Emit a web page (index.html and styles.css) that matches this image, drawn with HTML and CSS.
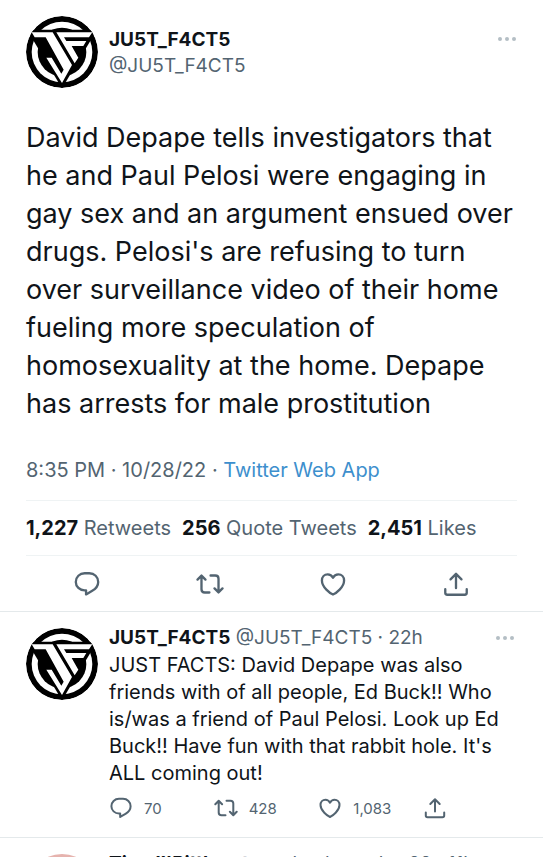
FILE: index.html
```html
<!DOCTYPE html>
<html lang="en">
<head>
  <meta charset="UTF-8" />
  <meta name="viewport" content="width=device-width, initial-scale=1.0"/>
  <title>JU5T_F4CT5 on Twitter</title>
  <link rel="stylesheet" href="styles.css">
</head>
<body>
  <!-- shared icons -->
  <svg class="sprite" aria-hidden="true">
    <symbol id="logo" viewBox="7 5 216 216">
      <circle cx="115" cy="113" r="108" fill="#000"/>
      <circle cx="115" cy="113" r="91" fill="#fff"/>
      <circle cx="115" cy="113" r="73" fill="#000"/>
      <path d="M10 46H220L115 222Z" fill="#000"/>
      <g fill="#fff">
        <path d="M24 54H87L145 152L115 206L68 130H84L113 178L120 166L66 69H33Z"/>
        <path d="M98 54H206L196 69H121L128 80H188L179 95H144L164 130L153 147Z"/>
      </g>
    </symbol>
    <symbol id="reply" viewBox="0 0 24 24">
      <path d="M10 2.8H14C18.300 2.800 21.600 6 21.600 10.200C21.600 13.400 19.600 16 16.500 17.800L11.200 20.900V17.500H10C5.700 17.500 2.400 14.300 2.400 10.200C2.400 6 5.700 2.800 10 2.800Z"/>
    </symbol>
    <symbol id="retweet" viewBox="0 0 24 24">
      <path d="M1.300 8.200L4.700 4.800L8.100 8.200M4.700 5V16.500C4.700 18.200 5.800 19.300 7.500 19.300H11.500M22.700 15.800L19.300 19.200L15.900 15.800M19.300 19V7.500C19.300 5.800 18.200 4.700 16.500 4.700H12.500"/>
    </symbol>
    <symbol id="like" viewBox="0 0 24 24">
      <path d="M12 21C9.500 20 2.500 14.800 2.500 9C2.500 5.900 4.700 3.700 7.400 3.700C9.400 3.700 11.100 4.900 12 6.700C12.900 4.900 14.600 3.700 16.600 3.700C19.300 3.700 21.500 5.900 21.500 9C21.500 14.800 14.500 20 12 21Z"/>
    </symbol>
    <symbol id="share" viewBox="0 0 24 24">
      <path d="M12 15.500V3.500M7.300 8L12 3.300L16.700 8M2.800 16.500V19.500C2.800 20.500 3.500 21.200 4.500 21.200H19.500C20.500 21.200 21.200 20.500 21.200 19.500V16.500"/>
    </symbol>
    <symbol id="more" viewBox="0 0 20 6">
      <circle cx="3" cy="3" r="2"/><circle cx="10" cy="3" r="2"/><circle cx="17" cy="3" r="2"/>
    </symbol>
  </svg>

  <article class="tweet">
    <header class="tweet-header">
      <svg class="avatar" role="img" aria-label="JU5T_F4CT5"><use href="#logo"/></svg>
      <div class="author">
        <a class="name" href="#">JU5T_F4CT5</a>
        <a class="handle" href="#">@JU5T_F4CT5</a>
      </div>
      <button class="more" aria-label="More"><svg><use href="#more"/></svg></button>
    </header>

    <p class="tweet-text">David Depape tells investigators that he and Paul Pelosi were engaging in gay sex and an argument ensued over drugs. Pelosi's are refusing to turn over surveillance video of their home fueling more speculation of homosexuality at the home. Depape has arrests for male prostitution</p>

    <p class="meta">8:35 PM · 10/28/22 · <a href="#">Twitter Web App</a></p>

    <div class="stats">
      <span><b>1,227</b> Retweets</span>
      <span><b>256</b> Quote Tweets</span>
      <span><b>2,451</b> Likes</span>
    </div>

    <div class="actions">
      <button aria-label="Reply"><svg><use href="#reply"/></svg></button>
      <button aria-label="Retweet"><svg><use href="#retweet"/></svg></button>
      <button aria-label="Like"><svg><use href="#like"/></svg></button>
      <button aria-label="Share"><svg><use href="#share"/></svg></button>
    </div>
  </article>

  <article class="reply">
    <svg class="avatar" role="img" aria-label="JU5T_F4CT5"><use href="#logo"/></svg>
    <div class="reply-body">
      <div class="reply-header">
        <div><a class="name" href="#">JU5T_F4CT5</a> <a class="handle" href="#">@JU5T_F4CT5</a> <span class="handle">· 22h</span></div>
        <button class="more" aria-label="More"><svg><use href="#more"/></svg></button>
      </div>
      <p class="reply-text">JUST FACTS: David Depape was also friends with of all people, Ed Buck!! Who is/was a friend of Paul Pelosi. Look up Ed Buck!! Have fun with that rabbit hole. It's ALL coming out!</p>
      <div class="reply-actions">
        <button aria-label="Reply"><svg><use href="#reply"/></svg>70</button>
        <button aria-label="Retweet"><svg><use href="#retweet"/></svg>428</button>
        <button aria-label="Like"><svg><use href="#like"/></svg>1,083</button>
        <button aria-label="Share"><svg><use href="#share"/></svg></button>
      </div>
    </div>
  </article>

  <article class="reply">
    <div class="avatar avatar-pink"></div>
    <div class="reply-body">
      <div class="reply-header">
        <div><a class="name" href="#">Timell'Pittles</a> <a class="handle" href="#">@meekankeaceke_22</a> <span class="handle">· 11h</span></div>
      </div>
    </div>
  </article>
</body>
</html>
```

FILE: styles.css
```css
* {
  box-sizing: border-box;
}

body {
  margin: 0;
  height: 100vh;
  overflow: hidden;
  background: #fff;
  color: #0f1419;
  font-family: Inter, "Liberation Sans", sans-serif;
  font-size: 19px;
}

p {
  margin: 0;
}

a {
  color: inherit;
  text-decoration: none;
}

button {
  display: flex;
  align-items: center;
  padding: 0;
  border: none;
  background: none;
  color: #536471;
  font: inherit;
  cursor: pointer;
}

.sprite {
  display: none;
}

.avatar {
  flex: none;
  width: 72px;
  height: 72px;
  border-radius: 50%;
}

.avatar-pink {
  background: #e6b3ae;
}

.name {
  font-weight: 700;
}

.handle {
  color: #536471;
}

.more {
  height: 20px;
}

.more svg {
  width: 20px;
  height: 6px;
  fill: #b4bec5;
}

.tweet {
  padding: 16px 26px 0;
}

.tweet-header {
  display: flex;
  align-items: flex-start;
  gap: 11px;
}

.author {
  display: flex;
  flex: 1;
  flex-direction: column;
  padding-top: 11px;
  line-height: 26px;
}

.tweet-header .more {
  margin-top: 13px;
}

.tweet-text {
  margin-top: 31px;
  font-size: 27px;
  line-height: 38px;
}

.meta {
  padding: 33px 0 16px;
  border-bottom: 1px solid #eff3f4;
  color: #536471;
  font-size: 20px;
  line-height: 28px;
}

.meta a {
  color: #3d8fcd;
}

.stats {
  display: flex;
  gap: 11px;
  padding: 13px 0;
  border-bottom: 1px solid #eff3f4;
  color: #536471;
  font-size: 20px;
  line-height: 28px;
}

.stats b {
  color: #0f1419;
}

.actions {
  display: flex;
  height: 55px;
}

.actions button {
  flex: 1;
  justify-content: center;
}

.actions svg,
.reply-actions svg {
  fill: none;
  stroke: #536471;
  stroke-width: 2;
  stroke-linecap: round;
  stroke-linejoin: round;
}

.actions svg {
  width: 28px;
  height: 28px;
}

.reply {
  display: flex;
  gap: 11px;
  padding: 16px 28px 17px 26px;
  border-top: 1px solid #e4e9eb;
}

.reply-body {
  flex: 1;
}

.reply-header {
  display: flex;
  justify-content: space-between;
  line-height: 20px;
}

.reply-text {
  padding: 4px 8px 0 0;
  font-size: 20px;
  line-height: 27px;
}

.reply-actions {
  display: grid;
  grid-template-columns: repeat(3, 1fr) auto;
  max-width: 338px;
  margin-top: 9px;
}

.reply-actions button {
  gap: 11px;
  font-size: 15px;
}

.reply-actions svg {
  width: 24px;
  height: 24px;
}
```
